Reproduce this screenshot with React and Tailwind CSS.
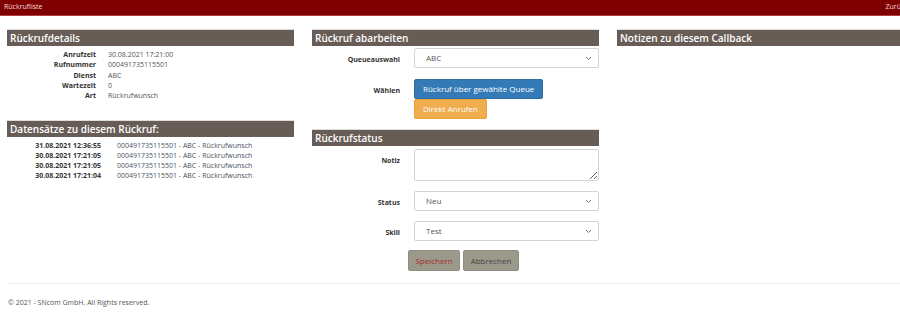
import React from 'react';

const details = [
  ['Anrufzeit', '30.08.2021 17:21:00'],
  ['Rufnummer', '000491735115501'],
  ['Dienst', 'ABC'],
  ['Wartezeit', '0'],
  ['Art', 'Rückrufwunsch'],
];

const records = [
  ['31.08.2021 12:36:55', '000491735115501 - ABC - Rückrufwunsch'],
  ['30.08.2021 17:21:05', '000491735115501 - ABC - Rückrufwunsch'],
  ['30.08.2021 17:21:05', '000491735115501 - ABC - Rückrufwunsch'],
  ['30.08.2021 17:21:04', '000491735115501 - ABC - Rückrufwunsch'],
];

function Heading({ children }) {
  return (
    <h2 className="h-[17px] bg-[#685c56] pl-[3px] text-[10px] leading-[17px] font-semibold text-white border-t border-[#e0dcd8]">
      {children}
    </h2>
  );
}

function Chevron() {
  return (
    <svg width="7" height="5" viewBox="0 0 7 5" className="text-[#666]">
      <path d="M1 1l2.5 2.5L6 1" fill="none" stroke="currentColor" strokeWidth="0.9" />
    </svg>
  );
}

function FakeSelect({ value }) {
  return (
    <div className="h-[20px] w-[185px] border border-[#d4d4d4] rounded-[2px] bg-white flex items-center justify-between pl-[11px] pr-[6px] text-[8px] text-[#555]">
      <span>{value}</span>
      <Chevron />
    </div>
  );
}

function FormRow({ label, children }) {
  return (
    <div className="grid grid-cols-[88px_185px] gap-x-[14px]">
      <label className="text-right font-bold text-[7px] text-[#333] pt-[7px]">{label}</label>
      <div>{children}</div>
    </div>
  );
}

export default function App() {
  return (
    <div className="w-full min-h-[324px] overflow-hidden bg-white font-['Open_Sans',sans-serif] text-[#333]">
      <div className="w-[912px]">
        <header className="h-[16px] bg-[#7f0000] border-b border-[#b04040] flex items-center justify-between px-[4px] text-[7px] text-[#f3dede]">
          <span>Rückrufliste</span>
          <span>Zurück</span>
        </header>

        <main className="grid grid-cols-[287px_287px_287px] gap-x-[18px] px-[7px] pt-[13px]">
          {/* column 1 */}
          <section>
            <Heading>Rückrufdetails</Heading>
            <div className="mt-[4px]">
              {details.map(([k, v]) => (
                <div key={k} className="flex text-[7px] leading-[10.3px]">
                  <span className="w-[89px] text-right font-bold text-[#333]">{k}</span>
                  <span className="ml-[12px] text-[#555]">{v}</span>
                </div>
              ))}
            </div>
            <div className="mt-[19px]">
              <Heading>Datensätze zu diesem Rückruf:</Heading>
              <div className="mt-[4px]">
                {records.map(([d, v], i) => (
                  <div key={i} className="flex text-[7px] leading-[9.8px]">
                    <span className="w-[94px] text-right font-bold text-[#333]">{d}</span>
                    <span className="ml-[16px] text-[#4a5160]">{v}</span>
                  </div>
                ))}
              </div>
            </div>
          </section>

          {/* column 2 */}
          <section>
            <Heading>Rückruf abarbeiten</Heading>
            <div className="mt-[2px] flex flex-col gap-[11px]">
              <FormRow label="Queueauswahl">
                <FakeSelect value="ABC" />
              </FormRow>
              <FormRow label="Wählen">
                <div className="flex flex-col items-start">
                  <button className="h-[20px] px-[8px] bg-[#337ab7] border border-[#2e6da4] rounded-[2px] text-white text-[8px]">
                    Rückruf über gewählte Queue
                  </button>
                  <button className="h-[20px] px-[8px] bg-[#f0ad4e] border border-[#eea236] rounded-[2px] text-white text-[8px]">
                    Direkt Anrufen
                  </button>
                </div>
              </FormRow>
            </div>

            <div className="mt-[10px]">
              <Heading>Rückrufstatus</Heading>
              <div className="mt-[3px] flex flex-col gap-[10px]">
                <FormRow label="Notiz">
                  <textarea className="block h-[32px] w-[185px] border border-[#d4d4d4] rounded-[2px] bg-white resize-y" />
                </FormRow>
                <FormRow label="Status">
                  <FakeSelect value="Neu" />
                </FormRow>
                <FormRow label="Skill">
                  <FakeSelect value="Test" />
                </FormRow>
              </div>
              <div className="mt-[9px] ml-[96px] flex gap-[3px]">
                <button className="h-[21px] w-[52px] bg-[#9a998a] border border-[#8f8e80] rounded-[2px] text-[8px] text-[#a52a2a]">
                  Speichern
                </button>
                <button className="h-[21px] w-[56px] bg-[#9a998a] border border-[#8f8e80] rounded-[2px] text-[8px] text-[#444]">
                  Abbrechen
                </button>
              </div>
            </div>
          </section>

          {/* column 3 */}
          <section>
            <Heading>Notizen zu diesem Callback</Heading>
          </section>
        </main>

        <footer className="mx-[8px] mt-[12px] border-t border-[#eeeeee] pt-[14px] text-[7px] text-[#555]">
          © 2021 - SNcom GmbH. All Rights reserved.
        </footer>
      </div>
    </div>
  );
}
